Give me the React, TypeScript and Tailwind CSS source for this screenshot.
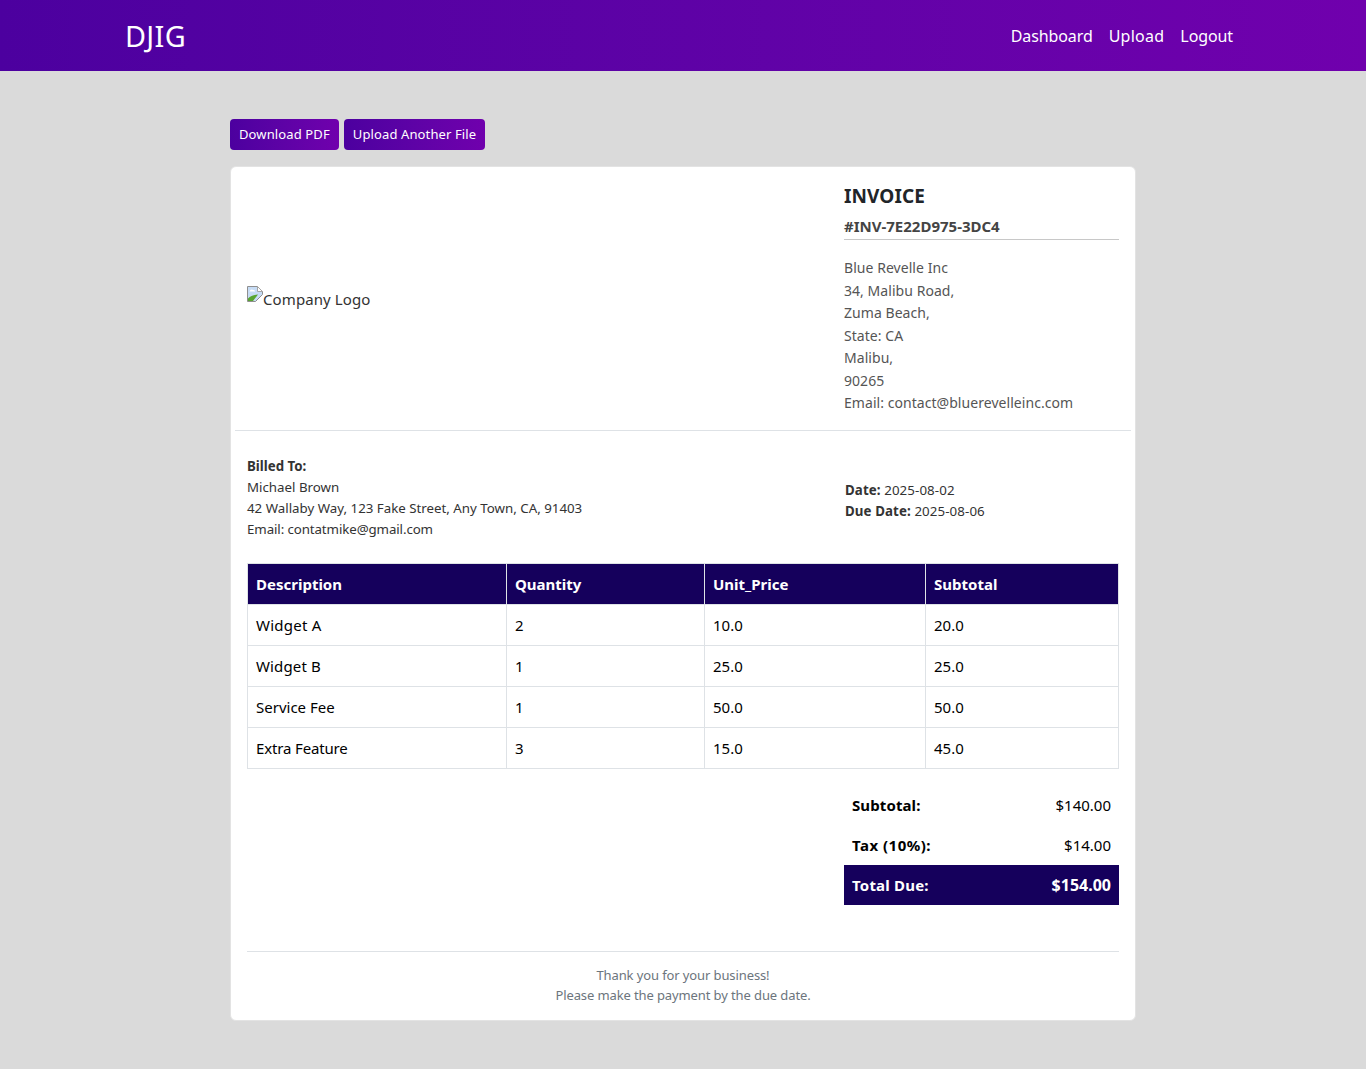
const F = "font-['Noto_Sans','Open_Sans',sans-serif]";

function BrokenImage() {
  return (
    <svg width="16" height="16" viewBox="0 0 16 16" className="mb-[10px] shrink-0">
      <path d="M.5.5h10l5 5v3l-7 7H.5z" fill="#c7dcf5" stroke="#8f8f8f" />
      <path d="M10.5.5v5h5z" fill="#fff" stroke="#a5a5a5" />
      <path d="M2.5 5.5c.6-2 2.500-2.600 3.600-1.400.8-.3 1.900.3 2 1.400z" fill="#fff" />
      <path d="M1 15v-2.500c2.500-2.500 6-3.500 10-4l-5 6.500z" fill="#58a52f" />
    </svg>
  );
}

const rows = [
  ["Widget A", "2", "10.0", "20.0"],
  ["Widget B", "1", "25.0", "25.0"],
  ["Service Fee", "1", "50.0", "50.0"],
  ["Extra Feature", "3", "15.0", "45.0"],
];
const firstCell = ["tracking-[0.25px]", "tracking-[0.15px]", "tracking-normal", "tracking-[-0.15px]"];
const grid = "grid grid-cols-[259px_198px_221px_1fr]";

export default function App() {
  return (
    <div className={`min-h-[1069px] bg-[#dadada] text-[#212529] ${F}`}>
      <header className="h-[71px] bg-gradient-to-r from-[#4c009f] to-[#7000ad] text-white">
        <div className="mx-auto flex h-full w-[1140px] items-center justify-between pl-3 pr-5">
          <span className="text-[28.8px] font-normal tracking-[0.35px]">DJIG</span>
          <nav className="flex gap-4 text-[16px] tracking-[-0.1px]">
            <span>Dashboard</span>
            <span className="tracking-[0.25px]">Upload</span>
            <span>Logout</span>
          </nav>
        </div>
      </header>

      <main className="mx-auto w-[906px] pt-12">
        <div className="flex h-[31px] gap-[5px] text-[13px] text-white">
          <button className="rounded-[4px] bg-gradient-to-r from-[#4c009f] to-[#7000ad] px-[9px] pt-px tracking-[0.12px]">Download PDF</button>
          <button className="rounded-[4px] bg-gradient-to-r from-[#4c009f] to-[#7000ad] px-[9px] pt-px tracking-[0.12px]">Upload Another File</button>
        </div>

        <section className="mt-4 h-[855px] rounded-[6px] border border-[#e3e3e3] bg-white px-1 pt-4">
          <div className="flex h-[248px] border-b border-[#dee2e6]">
            <div className="flex w-[609px] items-center pb-[15px] pl-3 text-[15px] tracking-[0.1px] text-[#333]">
              <BrokenImage />
              <span>Company Logo</span>
            </div>
            <div className="w-[275px]">
              <h2 className="text-[19px] leading-[26px] font-bold tracking-[0.1px] text-[#212529]">INVOICE</h2>
              <div className="mt-[6px] h-[25px] border-b border-[#c8c8c8] text-[15px] leading-[22px] font-bold text-[#444]">#INV-7E22D975-3DC4</div>
              <div className="mt-[17px] text-[14px] leading-[22.5px] tracking-[0.05px] text-[#555]">
                <div>Blue Revelle Inc</div>
                <div>34, Malibu Road,</div>
                <div>Zuma Beach,</div>
                <div>State: CA</div>
                <div>Malibu,</div>
                <div>90265</div>
                <div>Email: contact@bluerevelleinc.com</div>
              </div>
            </div>
          </div>

          <div className="flex h-[132px] items-center px-3 pt-[2px] text-[13.3px] leading-[21px] text-[#333]">
            <div className="w-[597px]">
              <div className="font-bold">Billed To:</div>
              <div>Michael Brown</div>
              <div>42 Wallaby Way, 123 Fake Street, Any Town, CA, 91403</div>
              <div className="tracking-[-0.1px]">Email: contatmike@gmail.com</div>
            </div>
            <div className="mt-[6px] pl-px tracking-[0.1px]">
              <div><b>Date:</b> 2025-08-02</div>
              <div><b>Due Date:</b> 2025-08-06</div>
            </div>
          </div>

          <div className="mx-3 border-l border-t border-[#dee2e6] text-[15px] text-black">
            <div className={`${grid} bg-[#15005c] font-bold text-white`}>
              {["Description", "Quantity", "Unit_Price", "Subtotal"].map((h) => (
                <div key={h} className="flex h-[41px] items-center border-r border-b border-[#dee2e6] px-2">{h}</div>
              ))}
            </div>
            {rows.map((r, ri) => (
              <div key={r[0]} className={grid}>
                {r.map((c, i) => (
                  <div key={i} className={`flex h-[41px] items-center border-r border-b border-[#dee2e6] px-2 ${i === 0 ? firstCell[ri] : ""}`}>{c}</div>
                ))}
              </div>
            ))}
          </div>

          <div className="mt-4 ml-auto mr-3 w-[275px] text-[15px] text-black">
            <div className="flex h-10 items-center justify-between px-2"><b className="tracking-[0.1px]">Subtotal:</b><span>$140.00</span></div>
            <div className="flex h-10 items-center justify-between px-2"><b className="tracking-[0.5px]">Tax (10%):</b><span>$14.00</span></div>
            <div className="flex h-10 items-center justify-between bg-[#15005c] px-2 font-bold text-white"><span className="tracking-[0.2px]">Total Due:</span><span className="text-[16px]">$154.00</span></div>
          </div>

          <footer className="mx-3 mt-[46px] border-t border-[#dee2e6] pt-[13px] text-center text-[13px] leading-[20px] tracking-[-0.11px] text-[#6c757d]">
            <div>Thank you for your business!</div>
            <div>Please make the payment by the due date.</div>
          </footer>
        </section>
      </main>
    </div>
  );
}
